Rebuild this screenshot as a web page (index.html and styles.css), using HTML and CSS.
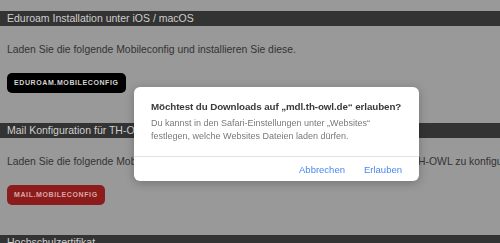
FILE: index.html
```html
<!DOCTYPE html>
<html lang="de">
<head>
  <meta charset="UTF-8">
  <title>TH-OWL Mobileconfig</title>
  <link rel="stylesheet" href="styles.css">
</head>
<body>
  <div class="page">
    <div class="section">
      <div class="section-title">Eduroam Installation unter iOS / macOS</div>
      <p class="section-text">Laden Sie die folgende Mobileconfig und installieren Sie diese.</p>
      <a class="download-btn black" href="#">EDUROAM.MOBILECONFIG</a>
    </div>
    <div class="section">
      <div class="section-title">Mail Konfiguration für TH-OWL unter iOS / macOS</div>
      <p class="section-text">Laden Sie die folgende Mobileconfig und installieren Sie diese, um Ihr E-Mail-Konto der TH-OWL zu konfigurieren.</p>
      <a class="download-btn red" href="#">MAIL.MOBILECONFIG</a>
    </div>
    <div class="section">
      <div class="section-title">Hochschulzertifikat</div>
    </div>
  </div>

  <div class="dialog">
    <div class="dialog-body">
      <div class="dialog-title">Möchtest du Downloads auf „mdl.th-owl.de“ erlauben?</div>
      <div class="dialog-text">Du kannst in den Safari-Einstellungen unter „Websites“<br>festlegen, welche Websites Dateien laden dürfen.</div>
    </div>
    <div class="dialog-actions">
      <button class="dialog-btn">Abbrechen</button>
      <button class="dialog-btn">Erlauben</button>
    </div>
  </div>
</body>
</html>
```

FILE: styles.css
```css
body {
  margin: 0;
  font-family: "Liberation Sans", Arial, sans-serif;
  background-color: #999999;
  overflow: hidden;
  height: 243px;
}

.page {
  padding-top: 11px;
  white-space: nowrap;
}

.section {
  margin-bottom: 30px;
}

.section-title {
  height: 15px;
  line-height: 15px;
  background-color: #333333;
  color: #cfcfcf;
  font-size: 10.5px;
  padding-left: 7px;
}

.section-text {
  margin: 17px 0 16px 7px;
  height: 14px;
  line-height: 14px;
  font-size: 10.4px;
  color: #333333;
}

.download-btn {
  display: block;
  width: fit-content;
  margin-left: 7px;
  height: 20px;
  line-height: 20px;
  padding: 0 7px;
  border-radius: 5px;
  font-size: 7px;
  font-weight: bold;
  letter-spacing: 0.6px;
  text-decoration: none;
}

.black {
  background-color: #000000;
  color: #d4d4d4;
}

.red {
  background-color: #8c1c1c;
  color: #d9a6a6;
}

/* Safari Download-Dialog */
.dialog {
  position: fixed;
  left: 134px;
  top: 87px;
  width: 285px;
  height: 94px;
  background-color: #ffffff;
  border-radius: 6px;
  box-shadow: 0 2px 10px rgba(0, 0, 0, 0.25);
  display: flex;
  flex-direction: column;
  white-space: nowrap;
}

.dialog-body {
  padding: 13px 0 0 17px;
  height: 56px;
  border-bottom: 1px solid #e2e2e2;
}

.dialog-title {
  font-size: 9.8px;
  letter-spacing: -0.1px;
  font-weight: bold;
  color: #3a3a3a;
  line-height: 14px;
  margin-bottom: 3px;
}

.dialog-text {
  font-size: 9px;
  color: #7a7a7a;
  line-height: 13px;
}

.dialog-actions {
  flex: 1;
  display: flex;
  justify-content: flex-end;
  align-items: center;
  gap: 19px;
  padding-right: 17px;
}

.dialog-btn {
  border: none;
  background: none;
  padding: 0;
  font-family: "Liberation Sans", Arial, sans-serif;
  font-size: 9.5px;
  color: #4a88f0;
}
```
